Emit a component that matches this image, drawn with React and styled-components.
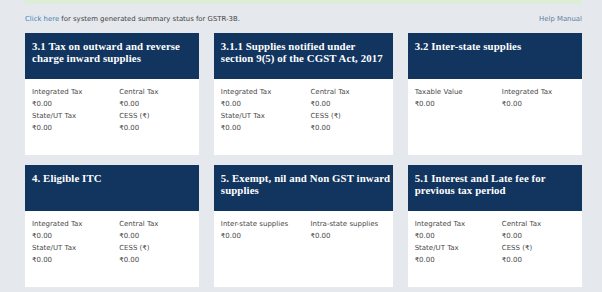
import React from "react";
import styled, { createGlobalStyle } from "styled-components";

const GlobalStyle = createGlobalStyle`
  body {
    margin: 0;
    background: #e5e8ec;
    font-family: "DejaVu Sans", Verdana, sans-serif;
  }
`;

const Page = styled.div`
  padding: 0 20px 0 25px;
  height: 292px;
  box-sizing: border-box;
  overflow: hidden;
`;

const Notice = styled.div`
  height: 4px;
  background: #dcefd6;
`;

const TopBar = styled.div`
  display: flex;
  justify-content: space-between;
  align-items: center;
  height: 12px;
  margin-top: 9px;
  margin-bottom: 8px;
  font-size: 6.9px;
  color: #444;
`;

const Link = styled.a`
  color: ${(props) => (props.muted ? "#5f7d9e" : "#4a7fb8")};
  text-decoration: none;
  cursor: pointer;
`;

const Grid = styled.div`
  display: grid;
  grid-template-columns: repeat(3, 1fr);
  column-gap: 14.5px;
  row-gap: 10px;
`;

const Card = styled.div`
  height: 122px;
  background: #fff;
  display: flex;
  flex-direction: column;
`;

const Header = styled.div`
  height: 46px;
  box-sizing: border-box;
  background: #12355f;
  color: #fff;
  padding: 8px 3px 0 7px;
  font-family: "Liberation Serif", "Times New Roman", serif;
  font-weight: bold;
  font-size: 10.8px;
  line-height: 11.5px;
  letter-spacing: 0.1px;
`;

const TitleLine = styled.div`
  white-space: nowrap;
`;

const Body = styled.div`
  display: grid;
  grid-template-columns: 1fr 1fr;
  padding-top: 7px;
`;

const Cell = styled.div`
  padding: 0 7px;
  font-size: 7px;
  line-height: 12px;
  color: #4a4a4a;
  white-space: nowrap;
`;

const full = [
  ["Integrated Tax", "Central Tax"],
  ["₹0.00", "₹0.00"],
  ["State/UT Tax", "CESS (₹)"],
  ["₹0.00", "₹0.00"],
];

const cards = [
  { title: ["3.1 Tax on outward and reverse", "charge inward supplies"], rows: full },
  { title: ["3.1.1 Supplies notified under", "section 9(5) of the CGST Act, 2017"], rows: full },
  {
    title: ["3.2 Inter-state supplies"],
    rows: [
      ["Taxable Value", "Integrated Tax"],
      ["₹0.00", "₹0.00"],
    ],
  },
  { title: ["4. Eligible ITC"], rows: full },
  {
    title: ["5. Exempt, nil and Non GST inward", "supplies"],
    rows: [
      ["Inter-state supplies", "Intra-state supplies"],
      ["₹0.00", "₹0.00"],
    ],
  },
  { title: ["5.1 Interest and Late fee for", "previous tax period"], rows: full },
];

const App = () => {
  return (
    <Page>
      <GlobalStyle />
      <Notice />
      <TopBar>
        <span>
          <Link>Click here</Link> for system generated summary status for GSTR-3B.
        </span>
        <Link muted>Help Manual</Link>
      </TopBar>
      <Grid>
        {cards.map((card) => (
          <Card key={card.title[0]}>
            <Header>
              {card.title.map((line) => (
                <TitleLine key={line}>{line}</TitleLine>
              ))}
            </Header>
            <Body>
              {card.rows.map((row, i) =>
                row.map((text, j) => <Cell key={`${i}-${j}`}>{text}</Cell>)
              )}
            </Body>
          </Card>
        ))}
      </Grid>
    </Page>
  );
};

export default App;
